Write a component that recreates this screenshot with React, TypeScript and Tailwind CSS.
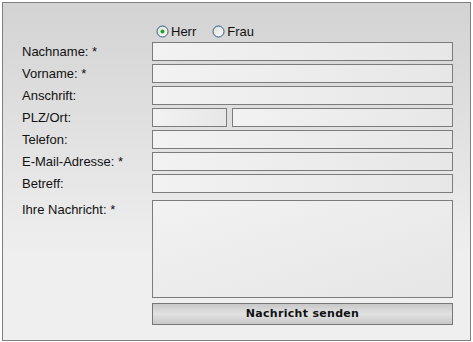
import { useState } from "react";

const fields: { label: string; kind: "text" | "plz" }[] = [
  { label: "Nachname: *", kind: "text" },
  { label: "Vorname: *", kind: "text" },
  { label: "Anschrift:", kind: "text" },
  { label: "PLZ/Ort:", kind: "plz" },
  { label: "Telefon:", kind: "text" },
  { label: "E-Mail-Adresse: *", kind: "text" },
  { label: "Betreff:", kind: "text" },
];

const inputCls =
  "h-[19px] border border-[#7c7c7c] bg-linear-to-r from-[#f2f2f2] to-[#e7e7e7] outline-none px-1 text-[13px]";

function Radio({ checked }: { checked: boolean }) {
  return (
    <svg width="13" height="13" viewBox="0 0 13 13" className="shrink-0">
      <defs>
        <linearGradient id={checked ? "rg1" : "rg2"} x1="0" y1="0" x2="1" y2="1">
          <stop offset="0" stopColor="#dcdcd7" />
          <stop offset="1" stopColor="#ffffff" />
        </linearGradient>
      </defs>
      <circle cx="6.5" cy="6.5" r="5.5" fill={`url(#${checked ? "rg1" : "rg2"})`} stroke="#2f5a89" strokeWidth="1" />
      {checked && <circle cx="6.5" cy="6.5" r="2" fill="#21a121" />}
    </svg>
  );
}

export default function App() {
  const [anrede, setAnrede] = useState("herr");

  return (
    <div className="w-[473px] h-[342px] bg-white pt-[2px] pl-[2px]" style={{ fontFamily: '"Liberation Sans", Arial, sans-serif' }}>
      <div className="w-[469px] h-[339px] border border-[#7f7f7f] bg-linear-to-b from-[#d3d3d3] to-[#efefef] to-75% pl-[19px] text-[13px] text-[#111]">
        {/* Anrede */}
        <div className="flex items-center h-[17px] mt-[20px] ml-[134px] mb-[2px]">
          <button className="flex items-center gap-[2px] mr-[16px]" onClick={() => setAnrede("herr")}>
            <Radio checked={anrede === "herr"} />
            <span>Herr</span>
          </button>
          <button className="flex items-center gap-[2px]" onClick={() => setAnrede("frau")}>
            <Radio checked={anrede === "frau"} />
            <span>Frau</span>
          </button>
        </div>

        {/* Felder */}
        <div className="flex flex-col gap-[3px]">
          {fields.map((f) => (
            <div key={f.label} className="flex items-center">
              <label className="w-[130px] leading-[19px]">{f.label}</label>
              {f.kind === "plz" ? (
                <div className="flex gap-[5px] w-[301px]">
                  <input className={`${inputCls} w-[75px]`} />
                  <input className={`${inputCls} flex-1`} />
                </div>
              ) : (
                <input className={`${inputCls} w-[301px]`} />
              )}
            </div>
          ))}
        </div>

        <div className="flex mt-[7px]">
          <label className="w-[130px] leading-[19px]">Ihre Nachricht: *</label>
          <textarea className="w-[301px] h-[98px] border border-[#7c7c7c] bg-linear-to-br from-[#f2f2f2] to-[#e6e6e6] outline-none resize-none" />
        </div>

        <div className="flex mt-[5px]">
          <div className="w-[130px]" />
          <button
            className="w-[301px] h-[22px] border border-[#777] bg-linear-to-b from-[#c8c8c8] via-[#e2e2e2] to-[#c9c9c9] text-[11px] font-bold tracking-[0.3px] text-[#111]"
            style={{ fontFamily: '"DejaVu Sans", Verdana, sans-serif' }}
          >
            Nachricht senden
          </button>
        </div>
      </div>
    </div>
  );
}
